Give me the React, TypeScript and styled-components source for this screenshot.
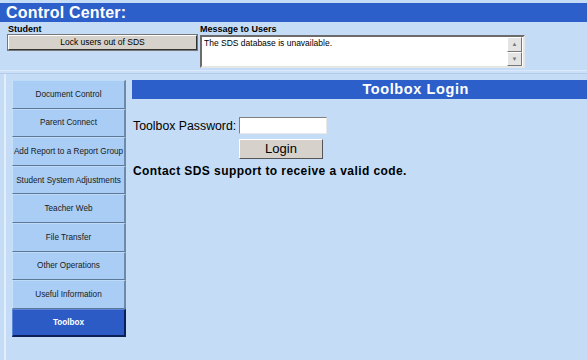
import React from 'react';
import styled, { createGlobalStyle } from 'styled-components';

const GlobalStyle = createGlobalStyle`
  body {
    margin: 0;
    background: #c4dcf6;
    font-family: "Liberation Sans", Arial, sans-serif;
  }
`;

const Page = styled.div`
  width: 587px;
  height: 360px;
  overflow: hidden;
  padding-top: 3px;
  box-sizing: border-box;
`;

const TitleBar = styled.div`
  height: 19px;
  background: #2d5fca;
  color: #fff;
  font-weight: bold;
  font-size: 16px;
  line-height: 19px;
  padding-left: 6px;
  letter-spacing: 0.2px;
`;

const ControlRow = styled.div`
  display: flex;
  gap: 3px;
  padding: 2px 0 0 8px;
  height: 46px;
`;

const Field = styled.div<{ $w: number }>`
  width: ${(p) => p.$w}px;
  display: flex;
  flex-direction: column;
`;

const Label = styled.div`
  font-size: 9px;
  font-weight: bold;
  line-height: 10px;
  color: #000;
`;

const LockButton = styled.div`
  margin-top: 1px;
  height: 15px;
  box-sizing: border-box;
  background: #d6d2cb;
  border: 1px solid #fff;
  border-right-color: #333;
  border-bottom-color: #333;
  outline: 1px solid #777;
  font-size: 8.5px;
  text-align: center;
  line-height: 13px;
`;

const MessageBox = styled.div`
  margin-top: 1px;
  height: 33px;
  box-sizing: border-box;
  background: #fff;
  border: 2px solid #6b6b6b;
  border-right-color: #e6e6e6;
  border-bottom-color: #e6e6e6;
  display: flex;
`;

const MessageText = styled.div`
  flex: 1;
  font-size: 8.5px;
  padding: 1px 2px;
`;

const ScrollBar = styled.div`
  width: 15px;
  margin-right: 1px;
  display: flex;
  flex-direction: column;
`;

const ScrollButton = styled.div`
  flex: 1;
  background: #e4e4e4;
  border: 1px solid #fff;
  border-right-color: #777;
  border-bottom-color: #777;
  display: flex;
  align-items: center;
  justify-content: center;
  font-size: 6px;
  color: #7a7a7a;
`;

const Divider = styled.div`
  height: 2px;
  border-top: 1px solid #dbe9fa;
  border-bottom: 1px solid #b2cbe8;
  background: #cbe0f8;
`;

const Main = styled.div`
  display: flex;
  margin-left: 4px;
  border-left: 2px solid #e2eefc;
  padding: 6px 0 0 6px;
  height: 290px;
`;

const SideBar = styled.div`
  width: 114px;
  display: flex;
  flex-direction: column;
`;

const NavButton = styled.div<{ $active?: boolean }>`
  height: 28.6px;
  box-sizing: border-box;
  display: flex;
  align-items: center;
  justify-content: center;
  white-space: nowrap;
  font-size: 8.2px;
  background: ${(p) => (p.$active ? '#2c5bc6' : '#a9cdf4')};
  color: ${(p) => (p.$active ? '#fff' : '#1a1a1a')};
  font-weight: ${(p) => (p.$active ? 'bold' : 'normal')};
  border-left: 1px solid ${(p) => (p.$active ? '#5b85dc' : '#c7e0fb')};
  border-top: 1px solid ${(p) => (p.$active ? '#5b85dc' : '#c0dbf8')};
  border-right: 2px solid ${(p) => (p.$active ? '#0c2058' : '#6d8aaa')};
  border-bottom: ${(p) => (p.$active ? '2px solid #0c2058' : '1px solid #5d7896')};
`;

const Content = styled.div`
  flex: 1;
  margin-left: 6px;
`;

const SectionHeader = styled.div`
  height: 19px;
  background: #2d5fca;
  color: #fff;
  font-weight: bold;
  font-size: 14.5px;
  letter-spacing: 0.6px;
  line-height: 19px;
  text-align: right;
  padding-right: 118px;
`;

const FormRow = styled.div`
  display: flex;
  align-items: center;
  margin-top: 18px;
  padding-left: 1px;
  font-size: 12.3px;
`;

const PasswordInput = styled.div`
  width: 88px;
  height: 17px;
  box-sizing: border-box;
  margin-left: 3px;
  background: #fff;
  border: 1px solid #7f7f7f;
  border-right-color: #e8e8e8;
  border-bottom-color: #e8e8e8;
`;

const LoginButton = styled.div`
  width: 84px;
  height: 20px;
  margin: 5px 0 0 107px;
  box-sizing: border-box;
  background: #d6d2cb;
  border: 1px solid #fff;
  border-right-color: #555;
  border-bottom-color: #555;
  font-size: 13px;
  text-align: center;
  line-height: 18px;
`;

const Notice = styled.div`
  margin-top: 5px;
  padding-left: 1px;
  font-size: 12px;
  letter-spacing: 0.42px;
  font-weight: bold;
`;

const navItems = [
  'Document Control',
  'Parent Connect',
  'Add Report to a Report Group',
  'Student System Adjustments',
  'Teacher Web',
  'File Transfer',
  'Other Operations',
  'Useful Information',
  'Toolbox',
];

const App = () => {
  return (
    <Page>
      <GlobalStyle />
      <TitleBar>Control Center:</TitleBar>
      <ControlRow>
        <Field $w={189}>
          <Label>Student</Label>
          <LockButton>Lock users out of SDS</LockButton>
        </Field>
        <Field $w={325}>
          <Label>Message to Users</Label>
          <MessageBox>
            <MessageText>The SDS database is unavailable.</MessageText>
            <ScrollBar>
              <ScrollButton>▲</ScrollButton>
              <ScrollButton>▼</ScrollButton>
            </ScrollBar>
          </MessageBox>
        </Field>
      </ControlRow>
      <Divider />
      <Main>
        <SideBar>
          {navItems.map((item) => (
            <NavButton key={item} $active={item === 'Toolbox'}>
              {item}
            </NavButton>
          ))}
        </SideBar>
        <Content>
          <SectionHeader>Toolbox Login</SectionHeader>
          <FormRow>
            Toolbox Password:
            <PasswordInput />
          </FormRow>
          <LoginButton>Login</LoginButton>
          <Notice>Contact SDS support to receive a valid code.</Notice>
        </Content>
      </Main>
    </Page>
  );
};

export default App;
